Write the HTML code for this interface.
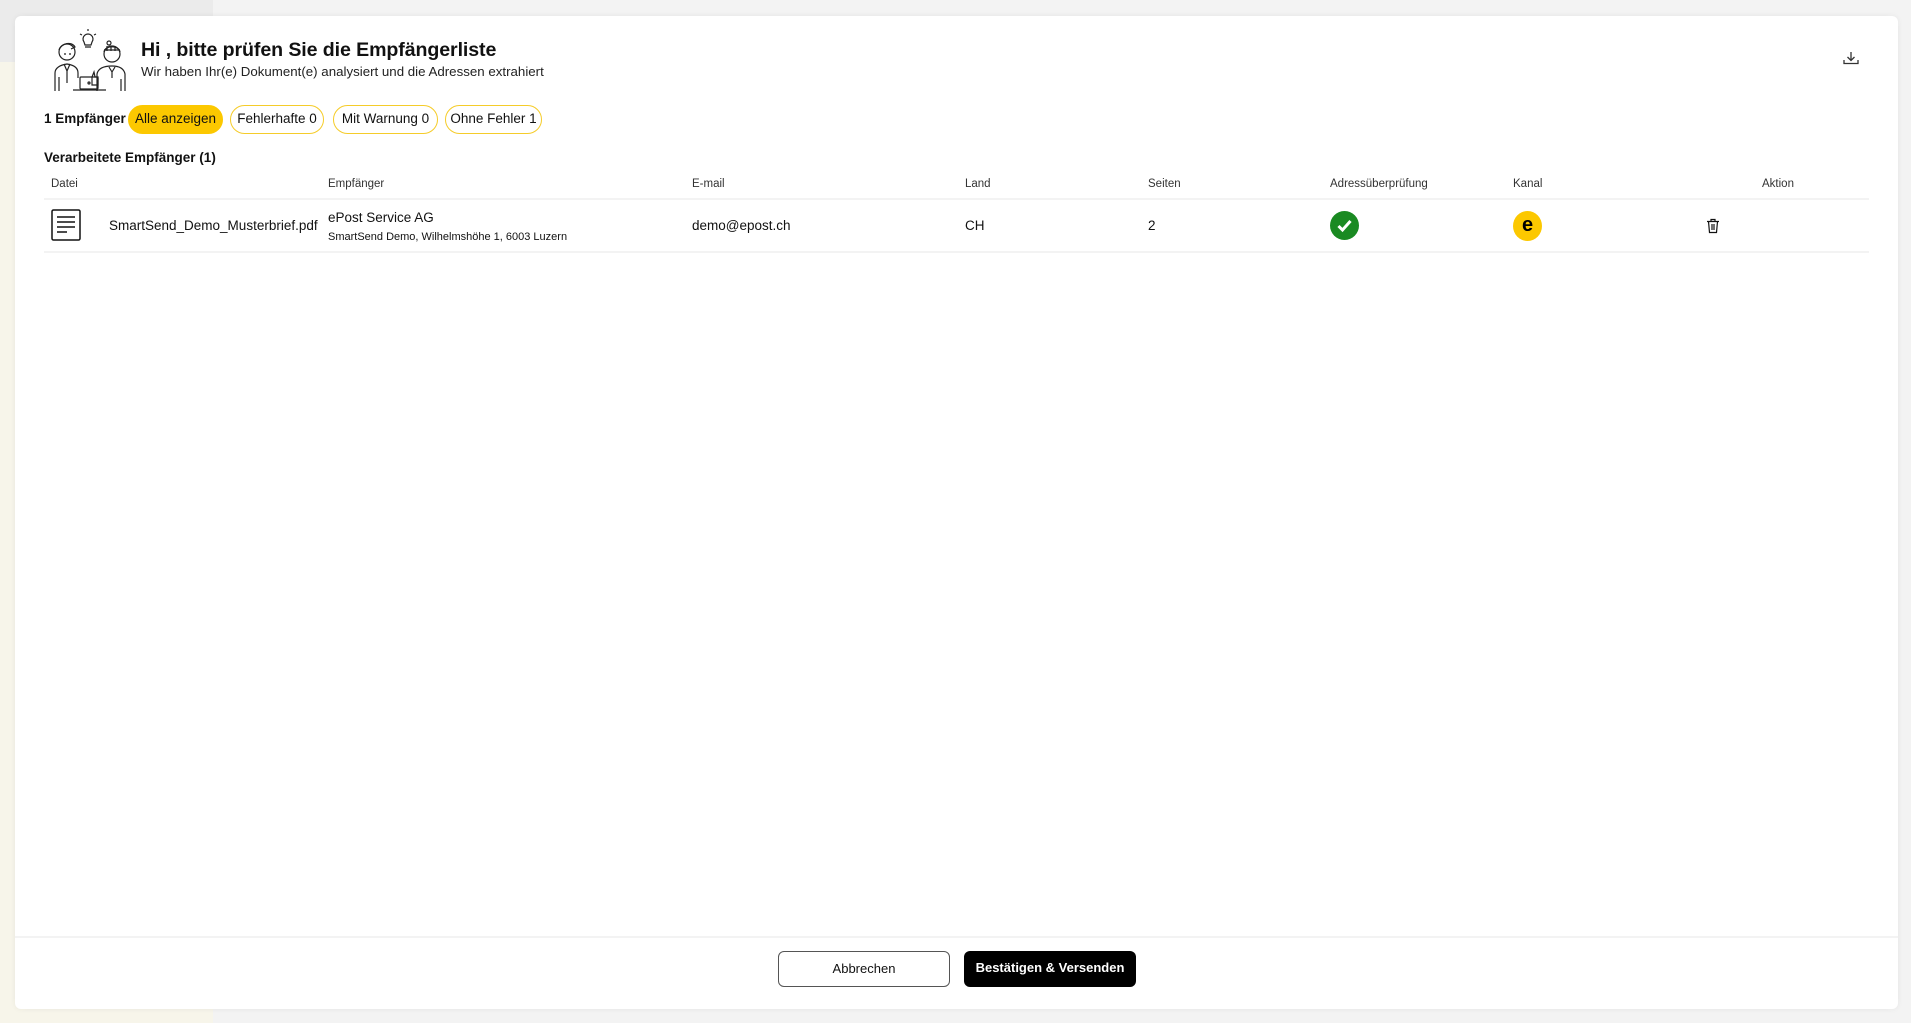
<!DOCTYPE html>
<html><head><meta charset="utf-8">
<style>
*{box-sizing:border-box;margin:0;padding:0}
body{width:1911px;height:1023px;overflow:hidden;background:#f3f3f3;font-family:"Liberation Sans",sans-serif;color:#111;position:relative}
.cream{position:absolute;left:0;top:62px;width:213px;height:961px;background:#f7f5ea}
.gray{position:absolute;left:0;top:0;width:213px;height:62px;background:#ebebeb}
.modal{position:absolute;left:15px;top:16px;width:1883px;height:993px;background:#fff;border-radius:6px;box-shadow:0 0 6px rgba(0,0,0,.06)}
.abs{position:absolute;white-space:nowrap}
h1{position:absolute;left:126px;top:23px;font-size:19.6px;font-weight:bold;letter-spacing:-.1px}
.sub{left:126px;top:48px;font-size:13.3px;color:#222}
.chip{position:absolute;top:89px;height:29px;border:1.5px solid #f5cc2a;border-radius:15px;font-size:13.5px;line-height:26px;text-align:center}
.th{position:absolute;top:162px;font-size:11.5px;color:#333}
.line{position:absolute;left:29px;width:1825px;height:2px;background:#f3f3f3}
.cell{position:absolute;font-size:13.5px}
.btn{position:absolute;top:935px;height:36px;width:172px;border-radius:6px;font-size:13px;text-align:center;line-height:34px}
</style></head><body>
<div class="gray"></div><div class="cream"></div>
<div class="modal">
<svg class="abs" style="left:36px;top:13px" width="76" height="64" viewBox="0 0 76 64" fill="none" stroke="#222" stroke-width="1.2">
<circle cx="16" cy="23" r="8"/><path d="M8 21c2-7 13-9 16-3l-4 2"/><path d="M13 25h2M18 25h2"/>
<path d="M4 62V44c0-5 5-8 12-9c7 1 11 4 11 9v5"/><path d="M13 35l3 7l3-7M16 42v12"/><path d="M8 48v14"/>
<circle cx="61" cy="25" r="8"/><path d="M53 23c1-7 15-7 16 0"/><path d="M53 21h16M56 17v5M60 17v5M64 17v5"/><circle cx="58" cy="14" r="2"/>
<path d="M46 62V45c1-5 6-8 15-8c8 0 12 3 13 8v17"/><path d="M58 38l3 5l3-5M61 43v6"/><path d="M70 50v12"/>
<path d="M33 13a5 5 0 1 1 8 0l-1 3h-6z"/><path d="M34 18h6M37 0v2M29 5l2 1M45 5l-2 1"/>
<path d="M41 48l2-5l1 5h3v8h-6z"/>
<rect x="29" y="48" width="18" height="12" rx="1"/><path d="M22 61h33"/><circle cx="38" cy="54" r="1"/>
</svg>
<h1>Hi , bitte prüfen Sie die Empfängerliste</h1>
<div class="abs sub">Wir haben Ihr(e) Dokument(e) analysiert und die Adressen extrahiert</div>
<svg class="abs" style="left:1828px;top:35px" width="16" height="14" viewBox="0 0 16 14" fill="none" stroke="#333" stroke-width="1.3"><path d="M8 1v8M4.5 6L8 9.5L11.5 6M1 9v3.5h14V9"/></svg>
<div class="abs" style="left:29px;top:95px;font-size:13.5px;font-weight:bold">1 Empfänger</div>
<div class="chip" style="left:113px;width:95px;background:#fcc800;border-color:#fcc800">Alle anzeigen</div>
<div class="chip" style="left:215px;width:94px">Fehlerhafte 0</div>
<div class="chip" style="left:318px;width:105px">Mit Warnung 0</div>
<div class="chip" style="left:430px;width:97px">Ohne Fehler 1</div>
<div class="abs" style="left:29px;top:134px;font-size:13.5px;font-weight:bold">Verarbeitete Empfänger (1)</div>
<div class="th" style="left:36px">Datei</div>
<div class="th" style="left:313px">Empfänger</div>
<div class="th" style="left:677px">E-mail</div>
<div class="th" style="left:950px">Land</div>
<div class="th" style="left:1133px">Seiten</div>
<div class="th" style="left:1315px">Adressüberprüfung</div>
<div class="th" style="left:1498px">Kanal</div>
<div class="th" style="left:1747px">Aktion</div>
<div class="line" style="top:182px"></div>
<div class="line" style="top:235px"></div>
<svg class="abs" style="left:36px;top:193px" width="30" height="32" viewBox="0 0 30 32" fill="none" stroke="#111" stroke-width="1.5"><rect x="1" y="1" width="28" height="30" rx="1.5"/><path d="M6 8h18M6 13h18M6 18h18M6 23h10"/></svg>
<div class="cell" style="left:94px;top:202px">SmartSend_Demo_Musterbrief.pdf</div>
<div class="cell" style="left:313px;top:194px">ePost Service AG</div>
<div class="cell" style="left:313px;top:215px;font-size:11px">SmartSend Demo, Wilhelmshöhe 1, 6003 Luzern</div>
<div class="cell" style="left:677px;top:202px">demo@epost.ch</div>
<div class="cell" style="left:950px;top:202px">CH</div>
<div class="cell" style="left:1133px;top:202px">2</div>
<svg class="abs" style="left:1315px;top:195px" width="29" height="29" viewBox="0 0 29 29"><circle cx="14.5" cy="14.5" r="14.5" fill="#1a8a22"/><path d="M8.5 15l4 4l8-9" fill="none" stroke="#fff" stroke-width="3"/></svg>
<svg class="abs" style="left:1498px;top:195px" width="29" height="30" viewBox="0 0 29 30"><ellipse cx="14.5" cy="15" rx="14.5" ry="15" fill="#fcc800"/><text x="14.5" y="20" text-anchor="middle" font-family="Liberation Sans" font-weight="bold" font-size="20" fill="#000">e</text></svg>
<svg class="abs" style="left:1691px;top:202px" width="14" height="16" viewBox="0 0 14 16" fill="none" stroke="#111" stroke-width="1.2"><path d="M1 3.5h12M5 3.5V1.5h4v2M2.5 3.5l1 11h7l1-11M6 6v6M8 6v6"/></svg>
<div class="line" style="top:920px;left:0;width:1883px"></div>
<div class="btn" style="left:763px;border:1.5px solid #555;background:#fff">Abbrechen</div>
<div class="btn" style="left:949px;background:#000;color:#fff;font-weight:bold">Bestätigen &amp; Versenden</div>
</div>
</body></html>
